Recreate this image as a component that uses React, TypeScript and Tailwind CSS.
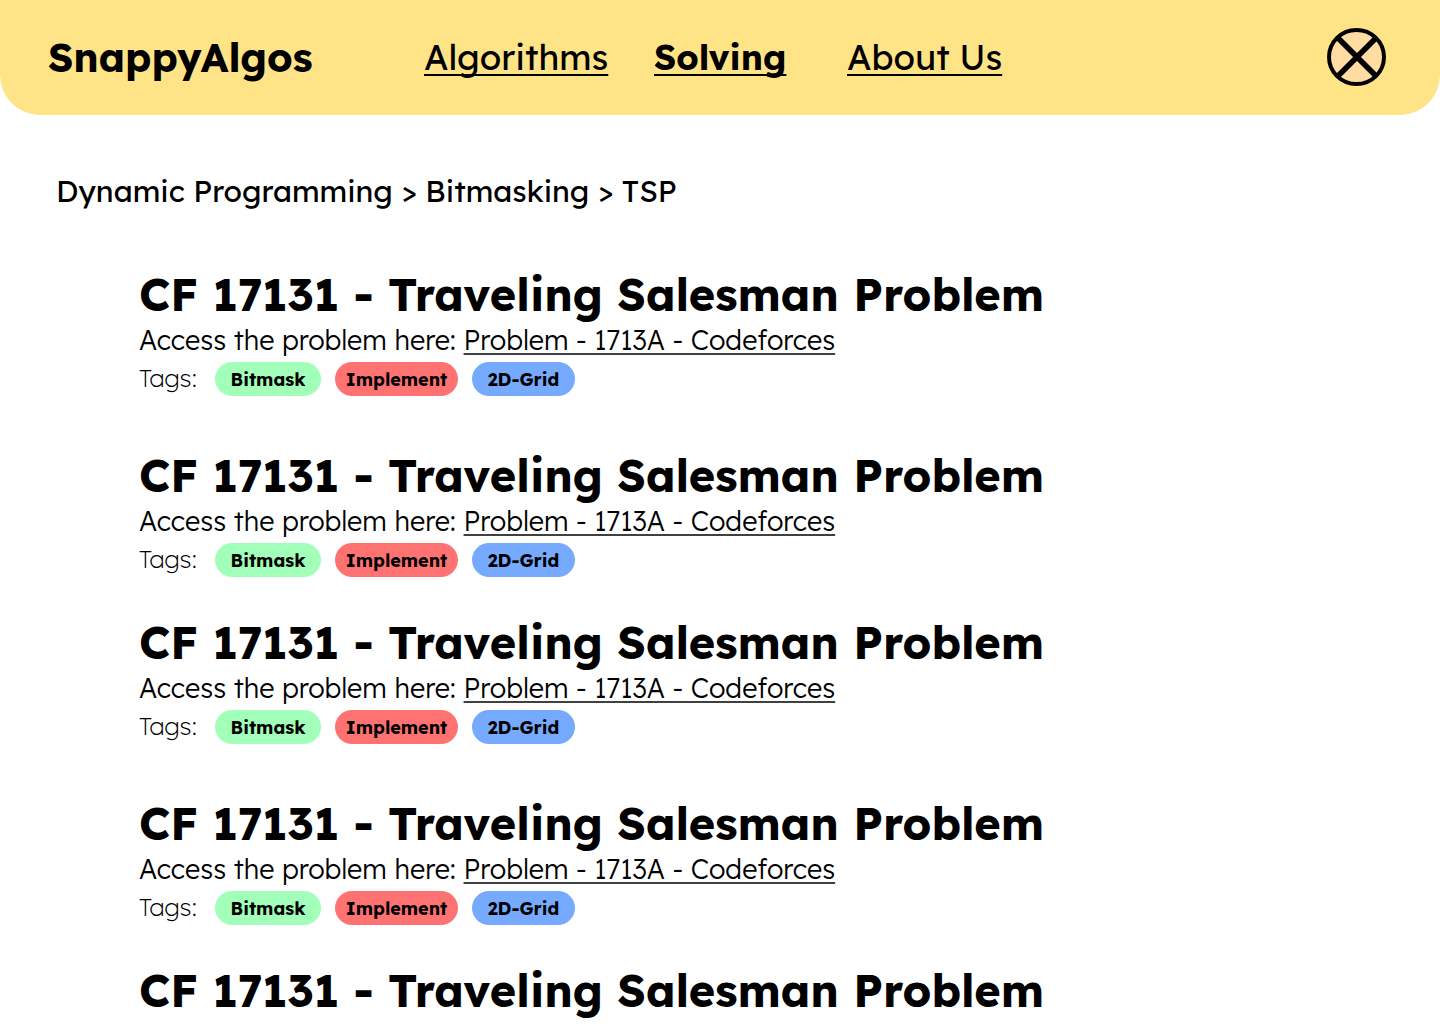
const tags = [
  { label: "Bitmask", style: "w-[106px] bg-[#a1ffba]" },
  { label: "Implement", style: "w-[123px] bg-[#ff7272]" },
  { label: "2D-Grid", style: "w-[103px] bg-[#75aaff]" },
];

const title = "CF 17131 - Traveling Salesman Problem";

function ProblemTitle() {
  return (
    <h2 className="text-[45px] leading-[54px] font-bold whitespace-nowrap">
      {title}
    </h2>
  );
}

function Problem() {
  return (
    <article>
      <ProblemTitle />
      <p className="text-[27px] leading-[38px] font-light whitespace-nowrap">
        Access the problem here:{" "}
        <a
          href="#problem"
          className="underline decoration-neutral-700 decoration-2 underline-offset-[3px] [text-decoration-skip-ink:none]"
        >
          Problem - 1713A - Codeforces
        </a>
      </p>
      <div className="mt-[3px] flex items-start">
        <span className="w-[76px] text-[25px] leading-[32px] font-extralight">
          Tags:
        </span>
        <ul className="flex gap-[14px]">
          {tags.map((tag) => (
            <li
              key={tag.label}
              className={`h-[34px] rounded-full text-center text-[18px] leading-[35px] font-bold ${tag.style}`}
            >
              {tag.label}
            </li>
          ))}
        </ul>
      </div>
    </article>
  );
}

const navLinks = [
  { label: "Algorithms", style: "w-[230px]" },
  { label: "Solving", style: "w-[193px] font-bold" },
  { label: "About Us", style: "" },
];

export default function App() {
  return (
    <div className="bg-white font-['Lexend','Lexend_Deca','Inter',sans-serif] text-black">
      <header className="flex h-[115px] items-center rounded-b-[40px] bg-[#ffe387] pr-[54px] pb-px pl-12">
        <h1 className="w-[376px] text-[40px] leading-[52px] font-bold">
          SnappyAlgos
        </h1>
        <nav className="flex-1">
          <ul className="flex text-[35px] leading-[46px] whitespace-nowrap">
            {navLinks.map((link) => (
              <li key={link.label} className={link.style}>
                <a
                  href="#nav"
                  className="underline decoration-2 underline-offset-[4px] [text-decoration-skip-ink:none]"
                >
                  {link.label}
                </a>
              </li>
            ))}
          </ul>
        </nav>
        <button type="button" aria-label="Profile">
          <svg width="59" height="58" viewBox="0 0 59 58" fill="none">
            <ellipse cx="29.5" cy="29" rx="27.5" ry="27" fill="#ffdca2" stroke="#000" strokeWidth="4" />
            <path d="M11 10 49 48M49 10 11 48" stroke="#000" strokeWidth="5.5" />
          </svg>
        </button>
      </header>

      <main className="pb-1">
        <nav
          aria-label="Breadcrumb"
          className="pt-[57px] pl-14 text-[30px] leading-[38px]"
        >
          Dynamic Programming &gt; Bitmasking &gt; TSP
        </nav>
        <section className="mt-[57px] flex flex-col gap-[38px] pl-[139px]">
          <div className="flex flex-col gap-[52px]">
            <Problem />
            <Problem />
          </div>
          <div className="flex flex-col gap-[52px]">
            <Problem />
            <Problem />
          </div>
          <ProblemTitle />
        </section>
      </main>
    </div>
  );
}
